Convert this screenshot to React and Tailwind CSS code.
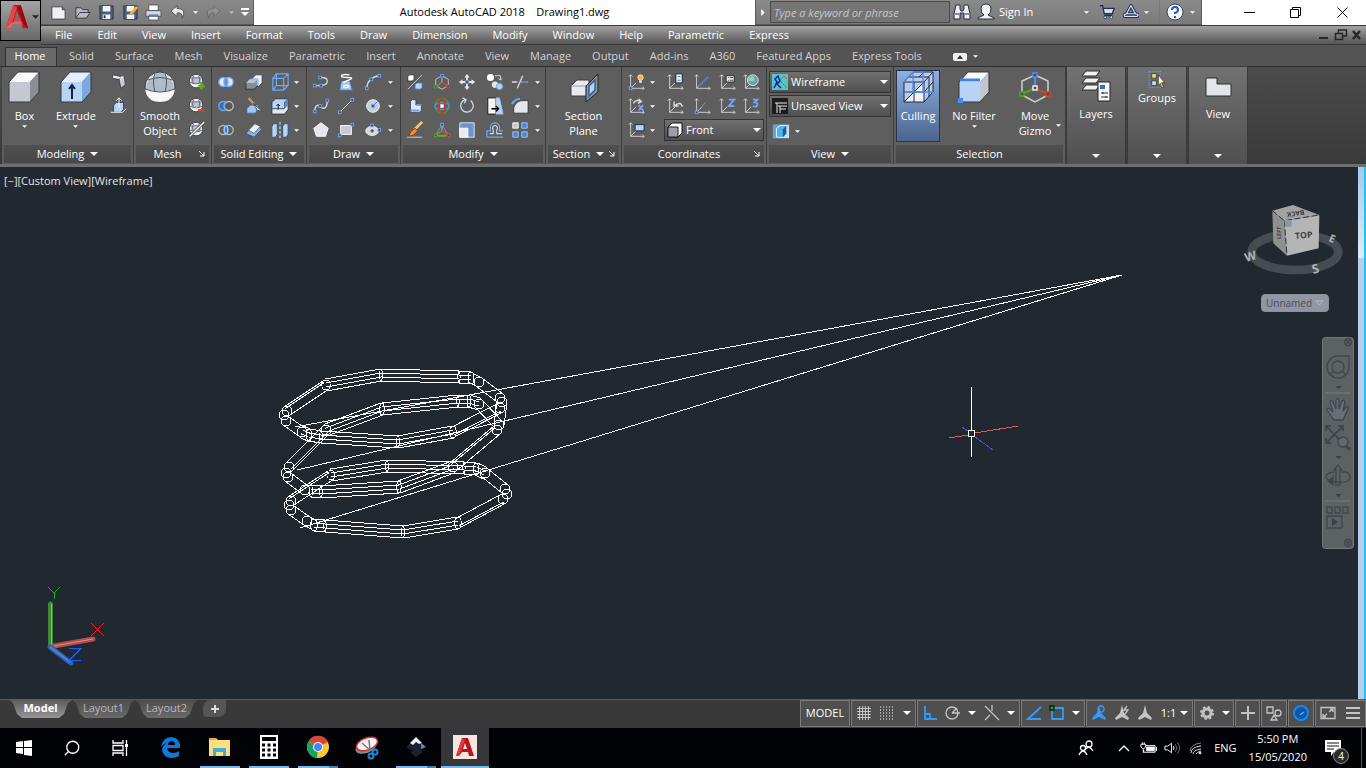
import { Search } from "lucide-react";

const menus = [
  "File", "Edit", "View", "Insert", "Format", "Tools", "Draw",
  "Dimension", "Modify", "Window", "Help", "Parametric", "Express",
];

const ribbonTabs = [
  "Solid", "Surface", "Mesh", "Visualize", "Parametric", "Insert", "Annotate",
  "View", "Manage", "Output", "Add-ins", "A360", "Featured Apps", "Express Tools",
];

const BLUE = "#6fa8f7";
const PALE = "#e4e7ee";
const ICE = "#b8d4f4";
const GREY = "#c9ccd2";

const box = (x, y, c = BLUE) => (
  <rect key={`${x}-${y}`} x={x - 1.5} y={y - 1.5} width="3" height="3" fill="#34496b" stroke={c} />
);

const ucs = (
  <path d="M4 2v15h15M2 4l2-2 2 2M17 15l2 2-2 2M4 17l6-6" fill="none" stroke="#d8d8d8" />
);

const ball = (
  <>
    <circle cx="9" cy="9" r="7.500" fill="#eff1f5" stroke="#3a3f49" />
    <path d="M3 7q6-3 12 0v3q-6 3-12 0z" fill="#b9c1ce" />
    <path d="M2 10q7 4 14 0M3 6q6-2 12 0M6 3q-2 5 0 9M12 3q2 5 0 9" fill="none" stroke="#5c616c" />
  </>
);

// 20x20 ribbon glyphs
const glyphs = {
  polysolid: (
    <>
      <path d="M3 2l9 2v5l-2-1v-1L3 6z" fill="#f0f1f4" stroke="#3b3e45" />
      <path d="M10 7l6-3 1 9-5 4z" fill={GREY} stroke="#3b3e45" />
      <path d="M12 4l4 0-5 4z" fill="#fff" />
    </>
  ),
  presspull: (
    <>
      <path d="M4 9l3-3h8v8l-3 3H4z" fill={ICE} stroke="#27405f" />
      <path d="M10 12V1M7 4l3-3 3 3M1 17h13l4-4" fill="none" stroke="#fff" />
    </>
  ),
  meshMore: <>{ball}<path d="M15 11v7M11.500 14.500h7" stroke="#5fb20c" strokeWidth="3" /></>,
  meshLess: <>{ball}<path d="M11 15h7" stroke="#e8381a" strokeWidth="3" /></>,
  meshNone: <>{ball}<path d="M2 17L18 1" stroke="#444" strokeWidth="3" /><path d="M2 17L18 1" stroke="#fff" strokeWidth="1.500" /></>,
  union: (
    <g stroke={BLUE} strokeWidth="1.500" fill="#dfeaff">
      <circle cx="7" cy="10" r="5" />
      <circle cx="13" cy="10" r="5" />
      <ellipse cx="10" cy="10" rx="2" ry="4" fill="#7c8ba5" />
    </g>
  ),
  subtract: (
    <g strokeWidth="1.500">
      <circle cx="7" cy="10" r="5" fill="#3c6cb4" stroke={BLUE} />
      <circle cx="13" cy="10" r="5" fill="#59595a" stroke="#bbb" />
      <path d="M10 6q-4 4 0 8" fill="none" stroke={BLUE} />
    </g>
  ),
  intersect: (
    <g strokeWidth="1.500" fill="none" stroke="#b4b4b4">
      <circle cx="7" cy="10" r="5" />
      <circle cx="13" cy="10" r="5" />
      <ellipse cx="10" cy="10" rx="2" ry="4" fill="#3f78d0" stroke="#9cc4ff" />
    </g>
  ),
  extrudeFaces: (
    <>
      <path d="M8 6l4-4h7v9l-4 4H8z" fill="#f3f4f7" stroke="#44474f" />
      <path d="M1 11l4-4h9v7l-4 4H1z" fill="#8b8d92" stroke="#333" />
      <path d="M1 11l4-4h9l-4 4z" fill="#c2c4c9" />
      <path d="M6 7h8v7" fill="none" stroke="#8ebcff" strokeWidth="2" />
    </>
  ),
  slice: (
    <>
      <path d="M2 13l4-4h9l-3 9H2z" fill="#9dc5f7" stroke="#3f6aa3" />
      <path d="M4 1l6 7" stroke="#d09a4c" strokeWidth="2.500" />
      <path d="M9 7l10 9-5-1z" fill="#fff" stroke="#444" />
    </>
  ),
  thicken: (
    <>
      <path d="M1 14l9-10 9 5-9 9z" fill="#85b4ef" stroke="#35527b" />
      <path d="M4 10l7-7 6 3-7 8z" fill="#eceef2" stroke="#666" />
    </>
  ),
  edges: (
    <path d="M2 6h12v13H2zM6 1h13v13H6zM2 6l4-5M14 6l5-5M14 19l5-5M2 19l4-5" fill="none" stroke={BLUE} strokeWidth="1.300" />
  ),
  faces: (
    <>
      <path d="M1 6l4-4h14v12l-4 5H1z" fill={PALE} stroke="#30343c" />
      <path d="M1 6l4-4h14l-4 4v7H1z" fill={ICE} stroke="#30405c" />
      <path d="M15 6l4-4v7l-4 4z" fill="#5f87bd" />
      <path d="M8 14V8M6 10l2-2 2 2" fill="none" stroke="#111" />
    </>
  ),
  separate: (
    <>
      <path d="M1 6l2-3h4v12l-2 3H1zM13 6l2-3h4v12l-2 3h-4z" fill={ICE} stroke="#31547f" />
      <path d="M10 1v18" stroke="#fff" strokeDasharray="3 2" />
    </>
  ),
  polyline: (
    <>
      <path d="M3 14h8q6-1 6-5t-6-4H9" fill="none" stroke="#cfd2d8" strokeWidth="1.500" />
      {box(3, 14)}{box(10, 14)}{box(9, 5)}
    </>
  ),
  helix: (
    <>
      <path d="M5 9h9l3 10H3z" fill="#a9c6ee" stroke="#4b79bb" />
      <path d="M14 2q-8-1-9 1t7 2 1 3-5 2M7 14q7-1 6 1t-6 1" fill="none" stroke="#fff" strokeWidth="1.500" />
    </>
  ),
  arc: (
    <>
      <path d="M3 17Q4 5 17 3" fill="none" stroke="#ddd" strokeWidth="1.500" />
      {box(3, 17)}{box(8, 7)}{box(17, 3)}
    </>
  ),
  spline: (
    <>
      <path d="M3 17c0-9 4-9 7-6s7 2 7-8" fill="none" stroke="#ddd" strokeWidth="1.500" />
      {box(3, 16)}{box(9, 10)}{box(17, 4)}
    </>
  ),
  line: <><path d="M3 17L17 3" stroke="#ddd" />{box(3, 17)}{box(17, 3)}</>,
  circle: (
    <>
      <circle cx="10" cy="10" r="7" fill="#c8ccd6" stroke="#fff" />
      <path d="M10 10l5-5" stroke="#3572c6" />
      {box(10, 10)}
    </>
  ),
  polygon: <path d="M10 2l8 6-3 9H5L2 8z" fill={PALE} stroke="#fff" />,
  rect: <><path d="M4 5h12v10H4z" fill="#c7cad3" stroke="#fff" />{box(17, 4)}{box(3, 16)}</>,
  ellipse: (
    <>
      <ellipse cx="9" cy="11" rx="7" ry="5" fill="#d5d8df" stroke="#fff" />
      <path d="M7 11h4M9 9v4" stroke="#222" />
      {box(9, 5)}{box(17, 10)}
    </>
  ),
  align3d: (
    <>
      <path d="M18 2L2 18" stroke="#ccc" />
      <path d="M2 4l2-2h5v5L7 9H2z" fill="#fff" stroke="#333" />
      <path d="M10 13l2-2h6v5l-2 2h-6z" fill={ICE} stroke="#3e72b8" />
    </>
  ),
  gizmo: (
    <>
      <path d="M10 3l7 4v7l-7 4-7-4V7z" fill="none" stroke="#ccc" />
      <path d="M10 10V3" stroke={BLUE} strokeWidth="1.500" />
      <path d="M10 10l6 5" stroke="#e2472a" strokeWidth="1.500" />
      <path d="M10 10l-6 5" stroke="#56a829" strokeWidth="1.500" />
      {box(10, 3)}{box(17, 15, "#e2472a")}{box(3, 15, "#56a829")}
    </>
  ),
  move: (
    <>
      <path d="M10 1l3 4h-2v3H9V5H7zM10 19l3-4h-2v-3H9v3H7zM1 10l4-3v2h3v2H5v2zM19 10l-4-3v2h-3v2h3v2z" fill="#e8e8e8" />
      {box(10, 10)}
    </>
  ),
  copy: (
    <>
      <circle cx="5" cy="5" r="4" fill="#fff" />
      <circle cx="10" cy="13" r="3.500" fill={PALE} />
      <circle cx="15" cy="15" r="3.500" fill={ICE} stroke="#6b9ddd" />
      <path d="M10 3h6v5M14 6l2 2 2-2" fill="none" stroke="#ddd" />
    </>
  ),
  trim: (
    <>
      <path d="M1 10h6M13 3L7 17" stroke="#ddd" strokeWidth="1.500" />
      <path d="M11 10h8" stroke={BLUE} strokeWidth="1.500" strokeDasharray="2 1" />
    </>
  ),
  offsetFace: (
    <>
      <path d="M5 5l2-2h4v6h6v6l-2 2H5z" fill={PALE} stroke="#3e4c63" />
      <path d="M5 15h10M11 9h6" stroke={BLUE} strokeWidth="2" />
    </>
  ),
  rotate3d: (
    <g fill="none" strokeWidth="1.800">
      <circle cx="10" cy="10" r="8" stroke="#459a29" />
      <ellipse cx="10" cy="10" rx="8" ry="4" stroke="#4c8cf0" />
      <ellipse cx="10" cy="10" rx="4" ry="8" stroke="#d8331e" />
      <rect x="9" y="9" width="2" height="2" fill="#fff" stroke="#fff" />
    </g>
  ),
  rotate: <path d="M14 4a7 7 0 1 1-6-1M5 1l4 2-2 4" fill="none" stroke="#c8d6ee" strokeWidth="1.500" />,
  taper: (
    <>
      <path d="M2 1h9v18H2z" fill="#f5f5f5" stroke="#111" />
      <path d="M11 1h4l4 18h-8z" fill={ICE} stroke="#9bbce6" />
      <path d="M6 13h8M11 10l3 3-3 3" fill="none" stroke="#000" strokeWidth="1.500" />
    </>
  ),
  fillet: (
    <>
      <path d="M3 18V12q2-7 9-8h7v14z" fill={PALE} stroke="#333" />
      <path d="M1 8q3-6 9-6" fill="none" stroke={BLUE} strokeWidth="2" />
    </>
  ),
  brush: (
    <>
      <path d="M18 1L9 10" stroke="#f2c477" strokeWidth="3" />
      <path d="M10 8l3 3-5 5-5 1 2-5z" fill="#f38b31" stroke="#7a3407" />
      <path d="M1 18h17" stroke="#ddd" />
    </>
  ),
  scale3d: (
    <>
      <path d="M10 4l7 12H3z" fill="none" stroke="#999" />
      <path d="M10 11V4" stroke={BLUE} strokeWidth="1.500" />
      <path d="M10 11l7 5" stroke="#e2472a" strokeWidth="1.500" />
      <path d="M10 11l-7 5M6 17h8" stroke="#56a829" strokeWidth="1.500" />
      {box(10, 4)}{box(17, 16, "#e2472a")}{box(3, 16, "#56a829")}
    </>
  ),
  scale: (
    <>
      <path d="M2 2h16v16H2z" fill="#6d93cc" stroke="#e6eefa" />
      <path d="M2 8h9v10H2z" fill="#e8eaee" stroke="#fff" />
    </>
  ),
  offset: (
    <g fill="none" strokeWidth="1.300">
      <path d="M4 14h4v-4q-2-4 2-5 4 1 2 5v4h6" stroke="#d5d8dd" />
      <path d="M1 18h18M1 18v-7h4V7a5 5 0 0 1 10 0v4h4" stroke="#74a8f0" />
    </g>
  ),
  array: (
    <g stroke="#fff">
      <path d="M2 2h6v6H2z" fill="#c2c5cc" />
      <path d="M12 2h6v6h-6zM2 12h6v6H2zM12 12h6v6h-6z" fill="#4d83d2" stroke="#a9cbfb" />
    </g>
  ),
  ucsNew: <>{ucs}<circle cx="15" cy="5" r="3" fill="#ffb02e" stroke="#ffe9ad" /><path d="M15 8v3" stroke="#ddd" strokeWidth="3" />{box(4, 17)}</>,
  ucsPanel: <>{ucs}<path d="M11 1h7v10h-7z" fill="#eef1f5" stroke="#222" /><path d="M13 4h3M13 8h3" stroke="#3568bb" /></>,
  ucsWorld: <>{ucs}<path d="M6 15L17 4" stroke="#4d82cc" strokeWidth="2" /></>,
  ucsNamed: <>{ucs}<path d="M9 3h9v7H9z" fill="#f1f1f1" stroke="#222" /><path d="M11 5h6M11 8h6" stroke="#333" strokeDasharray="1 1 5 0" /></>,
  globe: <>{ucs}<circle cx="12" cy="8" r="6" fill="#5f9fc0" stroke="#e3f1f7" /><path d="M8 5q5-3 6 1t-4 3l-3 0z" fill="#a5cf91" /></>,
  ucsX: <>{ucs}<path d="M7 7q3-5 8-2M13 2l3 3-4 2" fill="none" stroke="#ddd" strokeWidth="1.500" /><path d="M13 9l5 6M18 9l-5 6" stroke={BLUE} strokeWidth="2" /></>,
  ucsPrev: <>{ucs}<path d="M9 10q8-6 9 1M9 5v5h5" fill="none" stroke="#ddd" strokeWidth="1.500" /></>,
  ucsOrigin: <>{ucs}<path d="M5 16l9-10" stroke="#999" />{box(4, 17)}</>,
  ucsZ: <>{ucs}<path d="M12 3h6l-6 7h6" fill="none" stroke={BLUE} strokeWidth="2" /></>,
  ucs3: <>{ucs}<path d="M12 3h5l-3 3q4 0 3 3t-5 1" fill="none" stroke={BLUE} strokeWidth="2" /></>,
  ucsView: <>{ucs}<path d="M9 4h10v7H9z" fill={ICE} stroke="#222" /></>,
  viewCubeSmall: (
    <>
      <path d="M1 3h18v15H1z" fill="#c3dff1" />
      <path d="M1 3h8v15H1z" fill="#2a7dba" opacity=".6" />
      <path d="M5 7l4-3h7v9l-4 4H5z" fill="#4db2ee" stroke="#e5f5fd" />
      <path d="M12 8l4-4v9l-4 4z" fill="#13639b" />
    </>
  ),
};

function Glyph({ name }) {
  return (
    <button type="button" aria-label={name} className="flex h-6 w-6 items-center justify-center">
      <svg viewBox="0 0 20 20" className="h-[18px] w-[18px]">{glyphs[name]}</svg>
    </button>
  );
}

function Arrow({ small }) {
  return (
    <svg viewBox="0 0 8 4" className={small ? "h-[3px] w-[5px] shrink-0" : "h-1 w-2 shrink-0"}>
      <path d="M0 0h8L4 4z" fill="#fff" />
    </svg>
  );
}

function DropButton() {
  return (
    <button type="button" aria-label="More" className="flex h-6 w-2 items-center justify-center">
      <Arrow small />
    </button>
  );
}

function Launcher() {
  return (
    <svg viewBox="0 0 6 6" className="h-[6px] w-[6px]">
      <path d="M0 0l5 5M5 1v4H1" fill="none" stroke="#fff" />
    </svg>
  );
}

function Panel({ title, width, menu, launcher, children }) {
  return (
    <section className={`flex shrink-0 flex-col border-r border-[#3d3d3d] bg-[#5e5e5e] ${width}`}>
      <div className="flex h-[78px] px-0.5 pt-[3px]">{children}</div>
      <div className="mx-0.5 mb-px flex h-[18px] items-center bg-gradient-to-b from-[#4f4f4f] to-[#474747]">
        <span className="flex flex-1 items-center justify-center gap-[6px] whitespace-nowrap">
          {title}
          {menu && <Arrow />}
        </span>
        {launcher && <span className="pr-1"><Launcher /></span>}
      </div>
    </section>
  );
}

function BigButton({ label, icon, width, arrow, active }) {
  return (
    <button
      type="button"
      className={`flex h-[72px] flex-col items-center leading-[15px] ${width} ${
        active ? "border border-[#27344d] bg-gradient-to-b from-[#8fafe0] to-[#4c658f]" : "pt-px"
      }`}
    >
      <svg viewBox="0 0 32 32" className="mb-[5px] h-8 w-8 shrink-0">{icon}</svg>
      <span className="whitespace-pre-line">{label}</span>
      {arrow && <span className="mt-[2px] flex"><Arrow small /></span>}
    </button>
  );
}

function RibbonSelect({ label, icon, value, width }) {
  return (
    <label className={`flex h-[22px] items-center border border-[#333] bg-gradient-to-b from-[#6f6f6f] to-[#515151] px-[2px] ${width}`}>
      <svg viewBox="0 0 16 16" className="h-4 w-4 shrink-0">{icon}</svg>
      <select aria-label={label} className="ml-[3px] min-w-0 flex-1 appearance-none bg-transparent outline-none">
        <option>{value}</option>
      </select>
      <Arrow />
    </label>
  );
}

function CollapsedPanel({ title, icon, small }) {
  return (
    <button
      type="button"
      className="mr-[3px] flex w-[58px] shrink-0 flex-col items-center bg-gradient-to-b from-[#727272] to-[#505050] pb-[6px] pt-[2px] outline outline-[#3a3a3a]"
    >
      <svg viewBox="0 0 32 32" className={small ? "h-[21px] w-8" : "mb-[3px] h-[34px] w-8"}>{icon}</svg>
      <span>{title}</span>
      <span className="mt-auto flex"><Arrow /></span>
    </button>
  );
}

function LogoA({ className }) {
  return (
    <svg viewBox="0 0 24 28" className={className}>
      <path d="M8 1h8l8 25h-6l-2-6H8l-3 6H0z" fill="#c4161c" />
      <path d="M8 1l4 3-7 22H0zM10 15h5l2 5H8z" fill="#e3444a" />
      <path d="M12 4l4-3 8 25-4-3z" fill="#96090f" />
      <path d="M12 7l3 9H9z" fill="#6f6f6f" />
      <path d="M0 26l8-7h9l1 7-2-5H8l-3 5z" fill="#f0807c" opacity=".6" />
    </svg>
  );
}

const quickIcons = [
  ["New", <path d="M2 3h11l3 3v10H2zM13 3v3h3" fill="#eef0f4" stroke="#44474d" />],
  ["Open", <path d="M2 15V4h5l2 2h6v3M2 15l4-6h11l-4 6z" fill="#b9bcc3" stroke="#33363c" />],
  ["Save", <><path d="M2 2h14v14H2z" fill="#4d5e78" stroke="#2c3442" /><path d="M5 2h8v6H5zM5 11h8v5H5z" fill="#f2f3f5" /><path d="M6 12h2v3H6z" fill="#2c3442" /></>],
  ["Save As", <><path d="M2 2h14v14H2z" fill="#4d5e78" stroke="#2c3442" /><path d="M5 2h8v6H5zM5 11h8v5H5z" fill="#f2f3f5" /><path d="M16 3l-7 8" stroke="#efb23a" strokeWidth="3" /></>],
  ["Plot", <><path d="M4 1h10v6H4zM4 12h10v5H4z" fill="#fff" stroke="#555" /><path d="M1 7h16v6H1z" fill="#d5d7dc" stroke="#555" /><path d="M4 12h10" stroke="#4f83cf" strokeWidth="2" /></>],
];

function TitleBar() {
  return (
    <div className="flex h-[25px] bg-white">
      <div className="flex w-[213px] shrink-0 items-center border-b border-r border-[#5a5a5a] bg-gradient-to-b from-[#8a8a8a] to-[#7a7a7a] pl-[6px]">
        {quickIcons.map(([name, icon]) => (
          <button key={name} type="button" aria-label={name} className="flex w-6 justify-center">
            <svg viewBox="0 0 18 18" className="h-[17px] w-[17px]">{icon}</svg>
          </button>
        ))}
        <button type="button" aria-label="Undo" className="flex w-6 justify-center">
          <svg viewBox="0 0 18 18" className="h-4 w-4"><path d="M8 2L1 8l7 6v-4q6-1 6 6 5-11-6-11z" fill="#e6e8ec" stroke="#4b4e55" /></svg>
        </button>
        <span className="flex w-3 justify-center"><Arrow small /></span>
        <button type="button" aria-label="Redo" className="flex w-6 justify-center opacity-40">
          <svg viewBox="0 0 18 18" className="h-4 w-4"><path d="M10 2l7 6-7 6v-4q-6-1-6 6-5-11 6-11z" fill="#aaa" stroke="#444" /></svg>
        </button>
        <span className="flex w-3 justify-center opacity-50"><Arrow small /></span>
        <span className="flex w-4 flex-col items-center gap-[2px]">
          <span className="h-0.5 w-2 bg-white" />
          <Arrow />
        </span>
      </div>
      <h1 className="flex-1 whitespace-pre pt-1 text-center text-black">Autodesk AutoCAD 2018    Drawing1.dwg</h1>
      <div className="flex w-[447px] shrink-0 items-center border-x border-b border-[#5a5a5a] bg-gradient-to-b from-[#8a8a8a] to-[#7a7a7a]">
        <svg viewBox="0 0 4 8" className="mx-[5px] h-[7px] w-1"><path d="M0 0l4 4-4 4z" fill="#fff" /></svg>
        <input
          aria-label="Search"
          placeholder="Type a keyword or phrase"
          className="h-[22px] w-[180px] border border-[#4a4a4a] bg-[#757575] px-[3px] italic outline-none placeholder:text-[#c6c6c6]"
        />
        <svg viewBox="0 0 18 18" className="ml-[3px] h-[18px] w-[18px]">
          <path d="M3 2h4v4l1 2h2l1-2V2h4l2 9v5h-6v-6H7v6H1v-5z" fill="#f1f1f1" stroke="#222c44" />
          <path d="M2 11h4M12 11h4" stroke="#222c44" />
        </svg>
        <svg viewBox="0 0 18 18" className="ml-[6px] h-[18px] w-[18px]">
          <path d="M9 1q5 0 5 5 0 4-3 6l6 3v1H1v-1l6-3q-3-2-3-6 0-5 5-5z" fill="#f4f4f4" stroke="#222c44" />
        </svg>
        <button type="button" className="ml-1 flex-1 text-left text-white">Sign In</button>
        <Arrow small />
        <svg viewBox="0 0 18 18" className="ml-[10px] h-4 w-4">
          <path d="M1 2h3l2 9h9l2-6H5M6 13h9" fill="#d9dde5" stroke="#1e2d52" strokeWidth="1.500" />
          <circle cx="7" cy="15" r="1.500" fill="#fff" stroke="#1e2d52" /><circle cx="14" cy="15" r="1.500" fill="#fff" stroke="#1e2d52" />
        </svg>
        <svg viewBox="0 0 18 18" className="ml-2 mr-[5px] h-4 w-4">
          <path d="M9 2l5 9H4zM5 11q-5 0-3 3h14q3-3-3-3" fill="none" stroke="#1e2d52" strokeWidth="3.500" />
          <path d="M9 2l5 9H4zM5 11q-5 0-3 3h14q3-3-3-3" fill="none" stroke="#dfe8fa" strokeWidth="1.300" />
        </svg>
        <Arrow small />
        <span className="ml-[10px] flex h-full w-[42px] items-center justify-center gap-[6px] border-l border-[#777]">
          <svg viewBox="0 0 18 18" className="h-[18px] w-[18px]">
            <circle cx="9" cy="9" r="8" fill="#f5f7fb" stroke="#39445f" />
            <path d="M6 7q0-3 3-3t3 3q0 2-3 3v1M9 13v2" fill="none" stroke="#2357b5" strokeWidth="2" />
          </svg>
          <Arrow small />
        </span>
      </div>
      <div className="flex w-[164px] shrink-0 items-center justify-around pl-6 text-black">
        <button type="button" aria-label="Minimize"><svg viewBox="0 0 11 11" className="h-[11px] w-[11px]"><path d="M0 5.500h11" stroke="#000" /></svg></button>
        <button type="button" aria-label="Restore"><svg viewBox="0 0 11 11" className="h-[11px] w-[11px]"><path d="M.5 2.500h8v8h-8zM2.500 2V.500h8v8H9" fill="none" stroke="#000" /></svg></button>
        <button type="button" aria-label="Close"><svg viewBox="0 0 11 11" className="h-[11px] w-[11px]"><path d="M.5.500l10 10M10.500.500l-10 10" stroke="#000" /></svg></button>
      </div>
    </div>
  );
}

function Header() {
  return (
    <header className="flex bg-[#565656]">
      <button type="button" aria-label="Application menu" className="flex h-[41px] w-[41px] shrink-0 items-center gap-[3px] border border-black bg-gradient-to-b from-[#a4a4a4] to-[#696969] pb-2 pl-1">
        <LogoA className="h-[26px] w-[24px]" />
        <svg viewBox="0 0 8 4" className="h-1 w-[7px]"><path d="M0 0h8L4 4z" fill="#222" /></svg>
      </button>
      <div className="min-w-0 flex-1">
        <TitleBar />
        <div className="flex h-5 items-center justify-between border-b border-t border-[#3a3a3a] bg-gradient-to-b from-[#a3a3a3] to-[#565656] pl-[14px] pr-1">
          <nav className="flex w-[734px] justify-between text-white">
            {menus.map((m) => <button key={m} type="button">{m}</button>)}
          </nav>
          <svg viewBox="0 0 44 12" className="h-3 w-[44px]">
            <path d="M1 9h9" stroke="#262626" strokeWidth="2" />
            <path d="M17.500 4.500h7v6h-7zM20.500 4v-3h8v6h-4" fill="none" stroke="#262626" strokeWidth="1.500" />
            <path d="M35 2l7 8M42 2l-7 8" stroke="#262626" strokeWidth="2.500" />
          </svg>
        </div>
      </div>
    </header>
  );
}

function RibbonTabs() {
  return (
    <div className="flex h-[22px] items-end border-b border-[#2e2e2e] bg-[#545454] pl-[5px] text-[#d2d2d2]">
      <button type="button" className="h-[19px] w-[52px] border border-b-0 border-[#333] bg-[#6a6a6a] pb-0.5 pr-0.5 text-white">Home</button>
      <nav className="ml-3 flex h-[19px] w-[853px] items-center justify-between pb-px">
        {ribbonTabs.map((t) => <button key={t} type="button">{t}</button>)}
      </nav>
      <button type="button" aria-label="Minimize ribbon" className="ml-[31px] flex h-[19px] items-center gap-[6px]">
        <svg viewBox="0 0 14 8" className="h-2 w-[14px]"><rect width="14" height="8" rx="2" fill="#f2f2f2" /><path d="M4 6h6L7 2z" fill="#333" /></svg>
        <Arrow small />
      </button>
    </div>
  );
}

const cubeIcon = (front, side, top) => (
  <>
    <path d="M1 11h21v20H1z" fill={front} />
    <path d="M1 11L10 1h21l-9 10z" fill={top} />
    <path d="M22 11l9-10v20l-9 10z" fill={side} />
    <path d="M1 11L10 1h21v20l-9 10H1z" fill="none" stroke="#33363d" />
  </>
);

function Ribbon() {
  return (
    <div className="flex h-[97px] bg-gradient-to-b from-[#4b4b4b] to-[#3a3a3a] pl-[2px] text-white">
      <Panel title="Modeling" width="w-[132px]" menu>
        <BigButton label="Box" width="w-[42px]" arrow icon={cubeIcon("#c5c8d2", "#8b8e98", "#fafafa")} />
        <BigButton
          label="Extrude" width="w-16" arrow
          icon={<>{cubeIcon(ICE, "#7ea9df", "#e4effc")}<path d="M12 28V15M9 18l3-4 3 4" fill="none" stroke="#16243b" strokeWidth="2" /></>}
        />
        <div><Glyph name="polysolid" /><Glyph name="presspull" /></div>
      </Panel>
      <Panel title="Mesh" width="w-[78px]" launcher>
        <BigButton
          label={"Smooth\nObject"} width="w-[48px]"
          icon={
            <>
              <circle cx="16" cy="16" r="15" fill="#dfe2e8" stroke="#3b3e46" />
              <path d="M11 2h10v5l6 2q3 4 3 9-14 6-28 0 0-5 3-9l6-2z" fill="#b4bbc8" />
              <path d="M1 18q15 6 30 0-2 13-15 13T1 18z" fill="#f7f7f9" />
              <path d="M1 18q15 6 30 0M4 9q12-5 24 0M11 2q-3 8 0 19M21 2q3 8 0 19" fill="none" stroke="#50545e" />
            </>
          }
        />
        <div className="pl-px"><Glyph name="meshMore" /><Glyph name="meshLess" /><Glyph name="meshNone" /></div>
      </Panel>
      <Panel title="Solid Editing" width="w-[95px]" menu>
        <div className="grid grid-cols-[28px_26px_24px_12px] content-start">
          <Glyph name="union" /><Glyph name="extrudeFaces" /><Glyph name="edges" /><DropButton />
          <Glyph name="subtract" /><Glyph name="slice" /><Glyph name="faces" /><DropButton />
          <Glyph name="intersect" /><Glyph name="thicken" /><Glyph name="separate" /><DropButton />
        </div>
      </Panel>
      <Panel title="Draw" width="w-[94px]" menu>
        <div className="grid grid-cols-[25px_27px_25px_12px] content-start">
          <Glyph name="polyline" /><Glyph name="helix" /><Glyph name="arc" /><DropButton />
          <Glyph name="spline" /><Glyph name="line" /><Glyph name="circle" /><DropButton />
          <Glyph name="polygon" /><Glyph name="rect" /><Glyph name="ellipse" /><DropButton />
        </div>
      </Panel>
      <Panel title="Modify" width="w-[145px]" menu>
        <div className="grid grid-cols-[27px_25px_28px_25px_25px_12px] content-start">
          <Glyph name="align3d" /><Glyph name="gizmo" /><Glyph name="move" /><Glyph name="copy" /><Glyph name="trim" /><DropButton />
          <Glyph name="offsetFace" /><Glyph name="rotate3d" /><Glyph name="rotate" /><Glyph name="taper" /><Glyph name="fillet" /><DropButton />
          <Glyph name="brush" /><Glyph name="scale3d" /><Glyph name="scale" /><Glyph name="offset" /><Glyph name="array" /><DropButton />
        </div>
      </Panel>
      <Panel title="Section" width="w-[76px]" menu launcher>
        <BigButton
          label={"Section\nPlane"} width="w-full"
          icon={
            <>
              <path d="M3 15l6-6h12v12l-3 4H3z" fill="#e9eaee" stroke="#3c3f46" />
              <path d="M3 15h15v9" fill="none" stroke="#9b9ea6" />
              <path d="M18 15L30 3v18L18 31z" fill="#8b9099" stroke="#222" />
              <path d="M21 15l6-6v10l-6 6z" fill={ICE} stroke="#2f60a6" strokeWidth="1.500" />
            </>
          }
        />
      </Panel>
      <Panel title="Coordinates" width="w-[145px]" launcher>
        <div className="flex-1">
          <div className="grid grid-cols-[24px_15px_27px_25px_24px_24px]">
            <Glyph name="ucsNew" /><DropButton /><Glyph name="ucsPanel" /><Glyph name="ucsWorld" /><Glyph name="ucsNamed" /><Glyph name="globe" />
            <Glyph name="ucsX" /><DropButton /><Glyph name="ucsPrev" /><Glyph name="ucsOrigin" /><Glyph name="ucsZ" /><Glyph name="ucs3" />
          </div>
          <div className="flex items-center">
            <Glyph name="ucsView" /><DropButton />
            <RibbonSelect
              label="Named UCS" value="Front" width="ml-2 w-[100px]"
              icon={<><path d="M1 5l4-4h10v10l-4 4H1z" fill="#fff" stroke="#111" /><path d="M1 5h10v10H1z" fill="#9a9fa9" stroke="#222" /></>}
            />
          </div>
        </div>
      </Panel>
      <Panel title="View" width="w-[127px]" menu>
        <div className="flex flex-1 flex-col gap-0.5 pt-px">
          <RibbonSelect
            label="Visual style" value="Wireframe" width="w-[122px]"
            icon={<><rect width="16" height="16" fill="#57c4c4" /><path d="M2 14l3-6-2-3 3-3 2 5-3 3 4 4" fill="none" stroke="#1420a8" strokeWidth="1.500" /><path d="M8 6l4-4 3 3M9 8l6 6" fill="none" stroke="#c8452f" strokeDasharray="2 1" /></>}
          />
          <RibbonSelect
            label="Saved view" value="Unsaved View" width="w-[122px]"
            icon={<><rect width="16" height="16" fill="#1c1c1c" /><path d="M3 5h12M6 8h9M5 5v10M8 8v7M8 11h6" fill="none" stroke="#e8e8e8" /></>}
          />
          <div className="flex"><Glyph name="viewCubeSmall" /><DropButton /></div>
        </div>
      </Panel>
      <Panel title="Selection" width="w-[172px]">
        <BigButton
          label="Culling" width="w-11" active
          icon={
            <>
              <path d="M2 11L11 1h20v20l-9 10H2z" fill="#b9cbe8" />
              <path d="M2 31L22 11v20z" fill="#eef1f6" />
              <path d="M2 11h20v20H2zM2 11L11 1h20l-9 10M31 1v20l-9 10M12 11v20M2 21h20M7 6h20v20M17 6l5-5M22 21l9-10M2 31l20-20" fill="none" stroke="#1e2a40" />
              <path d="M11 1v20H2M11 21h20M2 11L11 1h10v20" fill="none" stroke="#4a8cf0" strokeWidth="1.300" />
            </>
          }
        />
        <BigButton
          label="No Filter" width="w-[68px]" arrow
          icon={<>{cubeIcon(ICE, "#c3c6ce", "#fafafa")}<path d="M2 9h20" stroke="#3f83e8" strokeWidth="3" /><path d="M0 27h5v5H0z" fill="#3f8cff" /></>}
        />
        <div className="flex">
          <BigButton
            label={"Move\nGizmo"} width="w-[54px]"
            icon={
              <>
                <path d="M16 4l13 6v14l-13 7-13-7V10z" fill="none" stroke="#cfcfcf" strokeWidth="1.500" />
                <path d="M16 17V4" stroke="#4b90f5" strokeWidth="2" />
                <path d="M16 17l13 6" stroke="#de3f20" strokeWidth="2" />
                <path d="M16 17L3 23" stroke="#50a51f" strokeWidth="2" />
                <g fill="#4b4b4b" strokeWidth="1.500">
                  <path d="M14 2h4v4h-4z" stroke="#4b90f5" /><path d="M27 21h4v4h-4z" stroke="#de3f20" />
                  <path d="M1 21h4v4H1z" stroke="#50a51f" /><path d="M14 15h4v4h-4z" stroke="#eee" />
                </g>
              </>
            }
          />
          <span className="-ml-[6px] self-end pb-[18px]"><Arrow small /></span>
        </div>
      </Panel>
      <div className="ml-[1px] flex">
        <CollapsedPanel
          title="Layers"
          icon={
            <>
              <path d="M2 20l4-5h14l-4 5zM2 13l4-5h14l-4 5zM2 6l4-5h14l-4 5z" fill="#f2f2f2" stroke="#2d2d2d" />
              <path d="M18 12h12v19H18z" fill="#f4f5f7" stroke="#222" />
              <path d="M20 15h5v4h-5z" fill="#3a6bc0" /><path d="M21 23h7M21 27h7M23 22v2M26 26v2" stroke="#333" />
            </>
          }
        />
        <CollapsedPanel
          title="Groups" small
          icon={
            <>
              <path d="M4 4h17v24H4z" fill="none" stroke="#5e97ee" strokeWidth="2" strokeDasharray="2 2" />
              <path d="M8 7h7v7H8z" fill="#f4db63" stroke="#222" /><path d="M8 18h7v7H8z" fill="#d5e0f4" stroke="#222" />
              <path d="M18 9l10 12h-5l3 6-3 1-2-6-3 3z" fill="#fff4c2" stroke="#222" />
            </>
          }
        />
        <CollapsedPanel title="View" icon={<path d="M4 8h11v6h14v12H4z" fill="#e3e5ea" stroke="#2e3036" />} />
      </div>
    </div>
  );
}

// Tube centre lines, one list of nodes for each turn of the coil
const coils = [
  [[287, 411], [326, 385], [381, 375], [459, 377], [471, 378], [479, 382], [500, 398], [502, 402], [500, 408], [453, 432], [398, 442], [321, 437], [309, 435], [302, 432], [286, 421], [284, 415], [287, 411]],
  [[502, 402], [499, 425], [479, 404], [469, 401], [458, 401], [382, 409], [326, 430], [289, 467], [286, 473], [288, 477], [305, 490], [311, 491], [321, 492], [399, 487], [453, 467], [497, 430], [499, 425]],
  [[291, 501], [331, 475], [387, 466], [464, 468], [476, 469], [485, 473], [505, 489], [507, 494], [503, 499], [458, 523], [403, 532], [325, 526], [314, 525], [307, 521], [291, 510], [289, 505], [291, 501]],
];

function direction(a, b) {
  const len = Math.hypot(b[0] - a[0], b[1] - a[1]);
  return { nx: (a[1] - b[1]) / len, ny: (b[0] - a[0]) / len, len };
}

function Tube({ nodes }) {
  return nodes.map((node, i) => {
    const [x, y] = node;
    const next = nodes[i + 1];
    const prev = nodes[i - 1];
    const out = next ? direction(node, next) : direction(prev, node);
    const into = prev ? direction(prev, node) : out;
    const facing = (Math.abs(out.ny) + Math.abs(into.ny)) / 2;
    const rx = Math.min(5, 1 + (1 - facing) * 35);
    let offsets = [-5, 5];
    if (Math.abs(out.ny) > 0.9) offsets = [-6, -2, 2, 6];
    else if (out.len > 30) offsets = [-5, -3, 5];
    return (
      <g key={i}>
        {next && out.len > 7 && offsets.map((o) => (
          <line key={o} x1={x + out.nx * o} y1={y + out.ny * o} x2={next[0] + out.nx * o} y2={next[1] + out.ny * o} />
        ))}
        <ellipse cx={x} cy={y} rx={rx} ry={rx > 4 ? 5 : 6} />
      </g>
    );
  });
}

function Model() {
  return (
    <svg viewBox="0 167 1358 532" preserveAspectRatio="xMinYMin meet" className="h-full w-full" shapeRendering="crispEdges">
      <g fill="none" stroke="#fff" strokeWidth="1">
        {coils.map((nodes, i) => <Tube key={i} nodes={nodes} />)}
        <path d="M295 427L1122 275L297 470M1122 275L300 528" />
        <path d="M971.500 387v44M971.500 437v20M968.500 430.500h6v6h-6z" />
      </g>
      <path d="M949 438l19-3M975 433l43-7" stroke="#e05a5a" />
      <path d="M962 427l6 4M975 437l18 13" stroke="#4a50d8" />
    </svg>
  );
}

function ViewCube() {
  return (
    <svg viewBox="24 30 336 240" className="h-20 w-28">
      <ellipse cx="195" cy="186" rx="130" ry="54" fill="none" stroke="#464c54" strokeWidth="26" />
      <path d="M127 62l62-17 79 30-105 17z" fill="#a3a3a3" />
      <path d="M127 62l36 30 8 105-41-37z" fill="#8f9092" />
      <path d="M163 92l105-17-2 100-95 22z" fill="#b4b5b6" />
      <path d="M127 62l36 30 105-17M163 92l8 105" fill="none" stroke="#333" strokeWidth="3" strokeDasharray="18 8" />
      <path d="M163 90h22v20h-20z" fill="#8a9aa5" />
      <g fontFamily="Open Sans, sans-serif" fontWeight="700" fill="#3c3f44">
        <text x="196" y="147" fontSize="26" transform="rotate(-5 196 147)">TOP</text>
        <text x="152" y="148" fontSize="17" transform="rotate(-88 152 148)">LEFT</text>
        <text x="222" y="60" fontSize="20" transform="rotate(172 222 60)">BACK</text>
      </g>
      <g fontFamily="Open Sans, sans-serif" fontWeight="700" fill="#b2b4b7">
        <text x="48" y="216" fontSize="36" transform="rotate(-16 48 216)">W</text>
        <text x="250" y="252" fontSize="38" transform="rotate(-16 250 252)">S</text>
        <text x="294" y="152" fontSize="32" transform="rotate(24 294 152)">E</text>
      </g>
    </svg>
  );
}

function NavigationBar() {
  return (
    <svg viewBox="0 0 32 212" className="h-[212px] w-8" role="img" aria-label="Navigation bar">
      <rect x=".5" y=".5" width="31" height="211" rx="3" fill="#5c6164" stroke="#73787b" />
      <g fill="none" stroke="#41464d" strokeWidth="1.300">
        <circle cx="26" cy="5" r="3.500" /><path d="M24 3l4 4M28 3l-4 4" />
        <path d="M16 19h11v11a11 11 0 1 1-11-11z" /><circle cx="16" cy="30" r="6" /><path d="M8 38l4-4M24 38l-4-4" />
        <path d="M3 56h26M3 164h26" stroke="#6f7477" />
        <path d="M12 83L5 73q-1-3 3-1l3 3-3-10q1-3 3 0l3 7v-9q2-3 3 0v9l3-8q2-2 3 1l-2 9 3-4q4-1 2 2l-5 11z" fill="#696e76" />
        <path d="M5 90l15 15M20 90L5 105M4 94v-5h5M16 89h5v5M4 101v5h5" strokeWidth="1.800" />
        <circle cx="21" cy="105" r="5" fill="#63686c" /><path d="M24 109l4 4" strokeWidth="3" />
        <path d="M16 128l4 5h-2v15h-4v-15h-2z" /><path d="M12 135q-8 1-8 5t12 5 12-5-8-5" />
        <path d="M11 140v8l-5-4z" fill="#41464d" />
        <path d="M5 170h5v6H5zM13 170h5v6h-5zM21 170h5v6h-5zM5 179h15v12H5z" />
        <circle cx="26" cy="206" r="3.500" /><path d="M24 205h4M24 207h4" />
      </g>
      <path d="M13 49h7l-3.500 3zM13 119h7l-3.500 3zM13 157h7l-3.500 3zM10 181l6 4-6 4z" fill="#3b4047" />
    </svg>
  );
}

function UcsIcon() {
  return (
    <svg viewBox="40 580 70 90" className="h-[90px] w-[70px]">
      <path d="M50.500 646V604" stroke="#3d8b37" strokeWidth="5" strokeLinecap="round" />
      <path d="M51.500 646V604" stroke="#7dc176" />
      <path d="M54 646l39-7" stroke="#b34e4c" strokeWidth="5" strokeLinecap="round" />
      <path d="M54 646l39-7" stroke="#dd8a86" />
      <path d="M50 647l21 16" stroke="#2d62b5" strokeWidth="5" strokeLinecap="round" />
      <path d="M50 647l20 15" stroke="#4e83d6" strokeWidth="2" />
      <g fill="none" shapeRendering="crispEdges">
        <path d="M48 587l6 6 6-6M54 593v6" stroke="#12b112" />
        <path d="M91 623l13 13M104 623l-13 13" stroke="#ff1f1f" />
        <path d="M69 648.500h12l-12 12h12" stroke="#1064ff" />
      </g>
    </svg>
  );
}

function Viewport() {
  return (
    <main className="flex min-h-0 flex-1 border-t-[3px] border-[#6d6f72] bg-[#212830]">
      <div className="relative min-w-0 flex-1">
        <Model />
        <p className="absolute left-1 top-[6px] text-[#e6e6e6]">[−][Custom View][Wireframe]</p>
        <div className="absolute right-2 top-[33px]"><ViewCube /></div>
        <label className="absolute right-[29px] top-[127px] flex h-[18px] w-[68px] items-center rounded border border-[#8b8f99] bg-[#9295a2] px-1 text-[10px] text-[#4c4f58]">
          <select aria-label="UCS" className="flex-1 appearance-none bg-transparent outline-none"><option>Unnamed</option></select>
          <svg viewBox="0 0 9 6" className="h-[6px] w-[9px]"><path d="M1 1h7L4.500 5z" fill="none" stroke="#b9bcc6" /></svg>
        </label>
        <div className="absolute right-1 top-[170px]"><NavigationBar /></div>
        <div className="absolute bottom-[29px] left-10"><UcsIcon /></div>
      </div>
      <div className="flex w-2 flex-col border-r-2 border-[#1fc3f0] bg-[#b9cdec]">
        <div className="h-[91px] bg-gradient-to-b from-[#a9c8ee] to-[#e0ecf8]" />
      </div>
    </main>
  );
}

function LayoutTab({ label, active }) {
  return (
    <button
      type="button"
      className={`h-[18px] w-[63px] pb-0.5 [clip-path:polygon(0_0,4px_3px,8px_14px,13px_18px,calc(100%-13px)_18px,calc(100%-8px)_14px,calc(100%-4px)_3px,100%_0)] ${
        active ? "bg-gradient-to-b from-[#5c5c5c] to-[#989898] font-bold text-white" : "bg-gradient-to-b from-[#4c4c4c] to-[#6b6b6b] text-[#b9b9b9]"
      }`}
    >
      {label}
    </button>
  );
}

function Cell({ width, children }) {
  return <div className={`flex h-[27px] items-center justify-around border border-[#7b7b7b] bg-[#4f4f4f] pb-px ${width}`}>{children}</div>;
}

function StatusIcon({ name, children }) {
  return (
    <button type="button" aria-label={name}>
      <svg viewBox="0 0 16 16" className="h-4 w-4" fill="none" stroke="#c4c4c4" strokeWidth="1.300">{children}</svg>
    </button>
  );
}

const person = "M8 0l2 8 5 5-1 2-6-3-6 3-1-2 5-5z";

function StatusBar() {
  return (
    <div className="flex h-[29px] shrink-0 justify-between border-t border-[#5a5a5a] bg-[#393939]">
      <div className="flex pl-[9px]">
        <LayoutTab label="Model" active />
        <LayoutTab label="Layout1" />
        <LayoutTab label="Layout2" />
        <button type="button" aria-label="New layout" className="ml-[5px] flex h-[17px] w-[23px] items-center justify-center rounded-bl-sm rounded-br-lg rounded-tl-lg bg-[#555]">
          <svg viewBox="0 0 8 8" className="h-2 w-2"><path d="M4 0v8M0 4h8" stroke="#ddd" strokeWidth="2" /></svg>
        </button>
      </div>
      <div className="flex gap-px text-white">
        <Cell width="w-[50px]"><button type="button">MODEL</button></Cell>
        <Cell width="w-[65px]">
          <StatusIcon name="Grid"><path d="M3.500 1v14M6.500 1v14M9.500 1v14M12.500 1v14" strokeWidth="1" /><path d="M1 3.500h14M1 6.500h14M1 9.500h14M1 12.500h14" strokeWidth="1" strokeDasharray="2 1" /></StatusIcon>
          <StatusIcon name="Snap"><path d="M1 2h14M1 5h14M1 8h14M1 11h14M1 14h14" strokeDasharray="1 2" /></StatusIcon>
          <Arrow />
        </Cell>
        <Cell width="w-[103px]">
          <StatusIcon name="Ortho"><path d="M3 1v13h12M3 9h5v5" stroke="#2f9bff" strokeWidth="1.800" /></StatusIcon>
          <StatusIcon name="Polar"><circle cx="7" cy="8" r="6" /><path d="M7 8h8M7 8l5-5" /></StatusIcon>
          <Arrow />
          <StatusIcon name="Isodraft"><path d="M1 1l14 14M8 0v6M6 10l-5 5" /></StatusIcon>
          <Arrow />
        </Cell>
        <Cell width="w-[64px]">
          <StatusIcon name="Object snap tracking"><path d="M15 2L2 14h13" stroke="#2f9bff" strokeWidth="1.800" /></StatusIcon>
          <StatusIcon name="Object snap"><path d="M3 3h11v11H3z" stroke="#2f9bff" strokeWidth="1.800" /><path d="M1 1h4v4H1z" fill="#1b1" stroke="#020" /></StatusIcon>
          <Arrow />
        </Cell>
        <Cell width="w-[107px]">
          <StatusIcon name="Annotation visibility"><path d={person} fill="#2f9bff" stroke="none" /><circle cx="10" cy="4" r="3" stroke="#2f9bff" /></StatusIcon>
          <StatusIcon name="Auto scale"><path d={person} fill="#c4c4c4" stroke="none" /><path d="M13 1l-3 4h4l-3 4" /></StatusIcon>
          <StatusIcon name="Annotation scale"><path d={person} fill="#c4c4c4" stroke="none" /></StatusIcon>
          <button type="button" className="flex items-center gap-1">1:1<Arrow /></button>
        </Cell>
        <Cell width="w-[40px]">
          <StatusIcon name="Workspace"><circle cx="8" cy="8" r="4" strokeWidth="3" /><circle cx="8" cy="8" r="6" strokeDasharray="2.400 2.300" strokeWidth="2" /></StatusIcon>
          <Arrow />
        </Cell>
        <Cell width="w-[25px]"><StatusIcon name="Monitor"><path d="M8 1v14M1 8h14" strokeWidth="2" /></StatusIcon></Cell>
        <Cell width="w-[26px]"><StatusIcon name="Isolate"><path d="M1 2h6v6H1zM8 10l3 5H5z" /><circle cx="12" cy="8" r="3" /></StatusIcon></Cell>
        <Cell width="w-[26px]"><StatusIcon name="Graphics performance"><circle cx="8" cy="8" r="7" fill="#0b57a4" stroke="#1786f5" strokeWidth="2" /><path d="M7 10l4-3" stroke="#58b2ff" /></StatusIcon></Cell>
        <Cell width="w-[51px]">
          <StatusIcon name="Clean screen"><path d="M1 2.500h14v11H1z" /><path d="M9 7l4-3M10 4h3v3M7 9l-4 3M3 9v3h3" /></StatusIcon>
          <StatusIcon name="Customize"><path d="M1 3h14M1 8h14M1 13h14" strokeWidth="2" /></StatusIcon>
        </Cell>
      </div>
    </div>
  );
}

const taskApps = [
  ["Edge", "", <path d="M2 11Q4 1 12 1q10 1 9 11H8q1 5 6 5 4 0 6-2v5q-3 2-8 2-8-1-9-8 0-4 5-7-4 1-6 4zM9 9h7q0-4-4-4-3 1-3 4z" fill="#0a7bd8" />],
  ["Explorer", "half", <><path d="M1 3h7l2 2h12v16H1z" fill="#ffdf80" /><path d="M1 3h7l1 2H1z" fill="#e8a93a" /><path d="M5 21v-8h13v8h-3v-4H8v4z" fill="#3aaee4" /></>],
  ["Calculator", "half", <><path d="M3 0h18v24H3z" fill="#fff" /><path d="M5 2h14v4H5z" fill="#000" /><path d="M5 10h14M5 15h14M5 20h14" stroke="#000" strokeWidth="3" strokeDasharray="3 2.500" /></>],
  [
    "Chrome", "stack",
    <>
      <circle cx="12" cy="12" r="11" fill="#fbc934" />
      <path d="M12 12L2.500 6.500A11 11 0 0 1 22 7z" fill="#db4437" />
      <path d="M12 12l-1 11A11 11 0 0 1 2.500 6.500z" fill="#1ba15e" />
      <circle cx="12" cy="12" r="5" fill="#fff" /><circle cx="12" cy="12" r="4" fill="#4688f1" />
    </>,
  ],
  [
    "Snipping Tool", "",
    <>
      <ellipse cx="11" cy="11" rx="11" ry="6" fill="#888" transform="rotate(-20 11 11)" />
      <ellipse cx="12" cy="8" rx="11" ry="6" fill="#f3f3f3" stroke="#d32f2f" strokeWidth="1.500" transform="rotate(-20 12 8)" />
      <path d="M7 7l9 8M14 4l1 11" stroke="#777" strokeWidth="1.500" />
      <circle cx="20" cy="16" r="2.500" fill="none" stroke="#1e88d8" strokeWidth="2" /><circle cx="16" cy="20" r="2.500" fill="none" stroke="#1e88d8" strokeWidth="2" />
    </>,
  ],
  ["Inkscape", "stack", <><path d="M12 2l10 10-5 3 2 2-7 5-6-5 4-1-8-4z" fill="#1b222e" /><path d="M12 2l6 6-3 1-3-2-3 3-3-2z" fill="#eef2f7" /><path d="M17 8l5 4-5 2z" fill="#6484b5" /></>],
  ["AutoCAD", "active", <><path d="M0 0h24v24H0z" fill="#f8e5df" /><path d="M9 3h6l6 18h-5l-1-4H9l-3 4H3zM12 8l-2 6h4z" fill="#b5171c" fillRule="evenodd" /><path d="M9 3l3 2-6 16H3z" fill="#dc3b3d" /></>],
];

const underline = {
  "": null,
  half: <span className="h-0.5 w-10 bg-[#76b9ed]" />,
  stack: <span className="flex h-0.5 w-10"><span className="w-[31px] bg-[#76b9ed]" /><span className="flex-1 bg-[#4f7fa8]" /></span>,
  active: <span className="h-0.5 w-full bg-[#76b9ed]" />,
};

function Taskbar() {
  return (
    <footer className="flex h-10 shrink-0 items-center justify-between bg-[#010306] text-white">
      <div className="flex h-full">
        <button type="button" aria-label="Start" className="flex w-12 items-center justify-center">
          <svg viewBox="0 0 16 16" className="h-4 w-4"><path d="M0 2l7-1v6H0zM8 1l8-1v7H8zM0 8h7v6l-7-1zM8 8h8v8l-8-1z" fill="#fff" /></svg>
        </button>
        <button type="button" aria-label="Search" className="flex w-12 items-center justify-center">
          <Search size={18} strokeWidth={1.700} className="-scale-x-100" />
        </button>
        <button type="button" aria-label="Task view" className="flex w-12 items-center justify-center">
          <svg viewBox="0 0 17 16" className="h-4 w-[17px]"><path d="M1 0v3h10V0M1 16v-3h10v3M1 5.500h10v5H1zM14.500 0v16" fill="none" stroke="#fff" strokeWidth="1.300" /><path d="M13 4h3v3h-3z" fill="#fff" /></svg>
        </button>
        <div className="ml-[3px] flex gap-px">
          {taskApps.map(([name, state, icon]) => (
            <button
              key={name}
              type="button"
              aria-label={name}
              className={`flex w-12 flex-col items-center ${state === "active" ? "bg-[#35373b]" : ""}`}
            >
              <span className="flex flex-1 items-center"><svg viewBox="0 0 24 24" className="h-6 w-6">{icon}</svg></span>
              {underline[state]}
            </button>
          ))}
        </div>
      </div>
      <div className="flex h-full items-center">
        <svg viewBox="0 0 16 16" className="mr-6 h-4 w-4" fill="none" stroke="#fff" strokeWidth="1.300">
          <circle cx="11" cy="4" r="3" /><path d="M7 10q4-6 8 1" /><circle cx="5" cy="8" r="2.500" /><path d="M1 15q4-8 8 0" />
        </svg>
        <svg viewBox="0 0 12 8" className="mr-[10px] h-2 w-3"><path d="M1 7l5-5 5 5" fill="none" stroke="#fff" strokeWidth="1.300" /></svg>
        <svg viewBox="0 0 18 14" className="mr-[7px] h-[14px] w-[17px]" fill="none" stroke="#fff">
          <path d="M6 4.500h10v7H4V9M17.500 6v4" /><path d="M7 6h8v4H7z" fill="#fff" /><path d="M1 3h5v3L3.500 8 1 6zM2.500 1v2M4.500 1v2M3.500 8v4" />
        </svg>
        <svg viewBox="0 0 18 14" className="mr-2 h-[14px] w-[17px]" fill="none" stroke="#fff">
          <path d="M1 5h3l4-3v10L4 9H1zM10 5q1 2 0 4" /><path d="M12 3q3 4 0 8M14 1q5 6 0 12" stroke="#777" />
        </svg>
        <svg viewBox="0 0 14 14" className="mr-[11px] h-[14px] w-[14px]" fill="none" stroke="#ddd">
          <path d="M4 13q0-4 8-5M2 12Q2 6 12 5" /><path d="M1 10q1-7 11-8" stroke="#888" /><path d="M7 13q1-2 5-3" /><circle cx="11" cy="12" r="1" fill="#fff" />
        </svg>
        <span className="mr-3">ENG</span>
        <time className="text-center leading-[18px]">5:50 PM<br />15/05/2020</time>
        <button type="button" aria-label="Notifications" className="relative ml-[18px] mr-3 h-6 w-6">
          <svg viewBox="0 0 16 16" className="h-4 w-4"><path d="M0 0h16v12H9l-3 4v-4H0z" fill="#fff" /><path d="M2 3h12M2 6h12M2 9h7" stroke="#111" /></svg>
          <span className="absolute -bottom-1 right-0 h-4 w-4 rounded-full border border-[#888] bg-[#2b2b2b] text-[10px] leading-[14px]">4</span>
        </button>
        <span className="mr-1 h-full w-px bg-[#555]" />
      </div>
    </footer>
  );
}

export default function App() {
  return (
    <div className="flex h-screen flex-col overflow-hidden bg-[#212830] font-['Open_Sans','Noto_Sans',sans-serif] text-[11px] leading-4">
      <Header />
      <RibbonTabs />
      <Ribbon />
      <Viewport />
      <StatusBar />
      <Taskbar />
    </div>
  );
}
